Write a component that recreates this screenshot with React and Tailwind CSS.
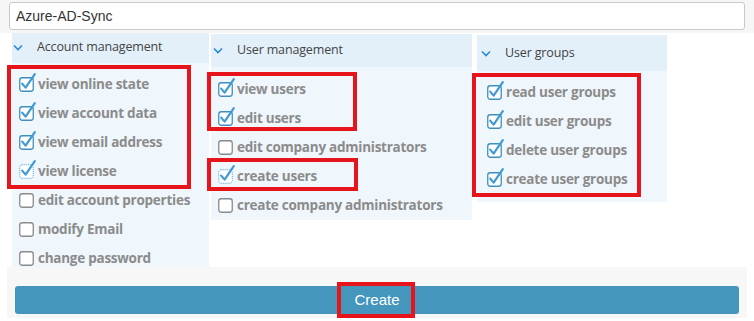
import React from "react";

const columns = [
  {
    title: "Account management",
    width: "w-[197px]",
    head: "mt-0 h-[30px] pl-[1px] pb-[2px]",
    body: "pt-[7px] pl-[7px]",
    items: [
      ["view online state", "on"],
      ["view account data", "on"],
      ["view email address", "on"],
      ["view license", "focus"],
      ["edit account properties", ""],
      ["modify Email", ""],
      ["change password", ""],
    ],
  },
  {
    title: "User management",
    width: "w-[261px]",
    head: "mt-[1px] h-[33px] pl-[2px]",
    body: "pt-[8px] pl-[7px]",
    items: [
      ["view users", "on"],
      ["edit users", "on"],
      ["edit company administrators", ""],
      ["create users", "focus"],
      ["create company administrators", ""],
    ],
  },
  {
    title: "User groups",
    width: "w-[190px] ml-[3px]",
    head: "mt-[2px] h-[36px] pl-[4px]",
    body: "pt-[7px] pb-[8px] pl-[10px]",
    items: [
      ["read user groups", "on"],
      ["edit user groups", "on"],
      ["delete user groups", "on"],
      ["create user groups", "on"],
    ],
  },
];

function Box({ state }) {
  const checked = state === "on" || state === "focus";
  return (
    <svg width="17" height="19" viewBox="0 0 17 19" className="-mt-[4px] shrink-0">
      <rect
        x="0.75"
        y="4.75"
        width="13.5"
        height="13.5"
        rx="2.5"
        fill="#fff"
        stroke={state === "focus" ? "#4a9fd8" : checked ? "#3f8fbe" : "#8a8a8a"}
        strokeWidth={state === "focus" ? 1 : 1.3}
        strokeDasharray={state === "focus" ? "1 1" : undefined}
      />
      {checked && (
        <path d="M3.2 10.6 L6.6 14.6 L15.8 1.2" fill="none" stroke="#3f9ad3" strokeWidth="2.2" strokeLinecap="round" strokeLinejoin="round" />
      )}
    </svg>
  );
}

function Chevron() {
  return (
    <svg width="10" height="7" viewBox="0 0 10 7" className="shrink-0">
      <path d="M1 1.5 L5 5.5 L9 1.5" fill="none" stroke="#2a8ad4" strokeWidth="1.6" />
    </svg>
  );
}

export default function App() {
  return (
    <div className="relative flex h-[321px] w-[754px] flex-col overflow-hidden bg-white font-['Open_Sans',sans-serif]">
      <div className="shrink-0 bg-[#f6f6f6] px-[9px] pt-[2px] pb-[3px]">
        <div className="flex h-[28px] items-center rounded-[3px] border border-[#c9c9c9] bg-white pl-[6px] font-['Liberation_Sans',sans-serif] text-[14px] text-[#333]">
          Azure-AD-Sync
        </div>
      </div>

      <div className="flex h-[234px] shrink-0 items-start gap-[2px] pl-[12px]">
        {columns.map((col) => (
          <div key={col.title} className={`${col.width} flex shrink-0 flex-col`}>
            <div className={`${col.head} flex shrink-0 items-center gap-[14px] bg-[#e3f0fa] text-[12.5px] tracking-[-0.15px] text-[#444]`}>
              <Chevron />
              <span>{col.title}</span>
            </div>
            <div className={`${col.body} flex flex-col bg-[#eff6fc]`}>
              {col.items.map(([label, state]) => (
                <div key={label} className="flex h-[29px] shrink-0 items-center gap-[2px]">
                  <Box state={state} />
                  <span className="text-[13.5px] font-bold tracking-[-0.25px] text-[#8b8b8b]">{label}</span>
                </div>
              ))}
            </div>
          </div>
        ))}
      </div>

      <div className="mx-[7px] h-[51px] shrink-0 bg-[#f7f7f7] px-[8px] pt-[19px]">
        <button className="flex h-[28px] w-full items-center justify-center rounded-[3px] bg-[#4596bd] font-['Liberation_Sans_Narrow','Liberation_Sans',sans-serif] text-[15px] text-white">
          Create
        </button>
      </div>

      {/* annotation boxes */}
      <div className="absolute left-[7px] top-[65px] h-[124px] w-[184px] border-4 border-[#e8141c]" />
      <div className="absolute left-[207px] top-[72px] h-[59px] w-[150px] border-4 border-[#e8141c]" />
      <div className="absolute left-[207px] top-[158px] h-[33px] w-[151px] border-4 border-[#e8141c]" />
      <div className="absolute left-[472px] top-[73px] h-[124px] w-[169px] border-4 border-[#e8141c]" />
      <div className="absolute left-[337px] top-[282px] h-[36px] w-[78px] border-4 border-[#e8141c]" />
    </div>
  );
}
